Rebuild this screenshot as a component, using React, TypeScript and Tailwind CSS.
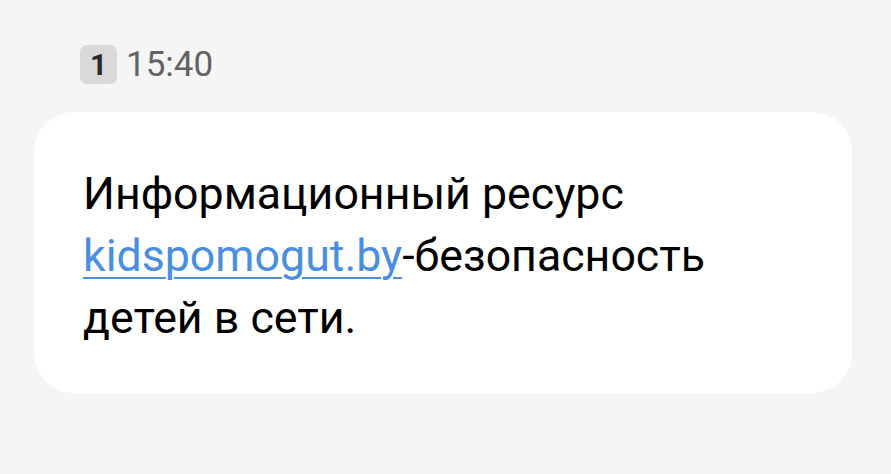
export default function App() {
  return (
    <div className="min-h-[474px] w-full bg-[#f5f5f5] pt-[45px] font-['Roboto',sans-serif]">
      {/* Header: sim slot + time */}
      <div className="flex items-center gap-[9px] pl-[80px]">
        <div className="flex h-[39px] w-[37px] items-center justify-center rounded-[7px] bg-[#d9d9d9] text-[30px] font-bold text-[#2a2a2a]">
          1
        </div>
        <div className="text-[35px] leading-none text-[#626262]">15:40</div>
      </div>

      {/* Message bubble */}
      <div className="mx-[34px] mt-[28px] h-[281px] w-[818px] rounded-[40px] bg-white px-[49px] pt-[51px]">
        <p className="text-[44.7px] leading-[62px] text-black">
          Информационный ресурс{' '}
          <a className="text-[#4a8ee0] underline decoration-[2px] underline-offset-[6px]">kidspomogut.by</a>
          -безопасность детей в сети.
        </p>
      </div>
    </div>
  );
}
